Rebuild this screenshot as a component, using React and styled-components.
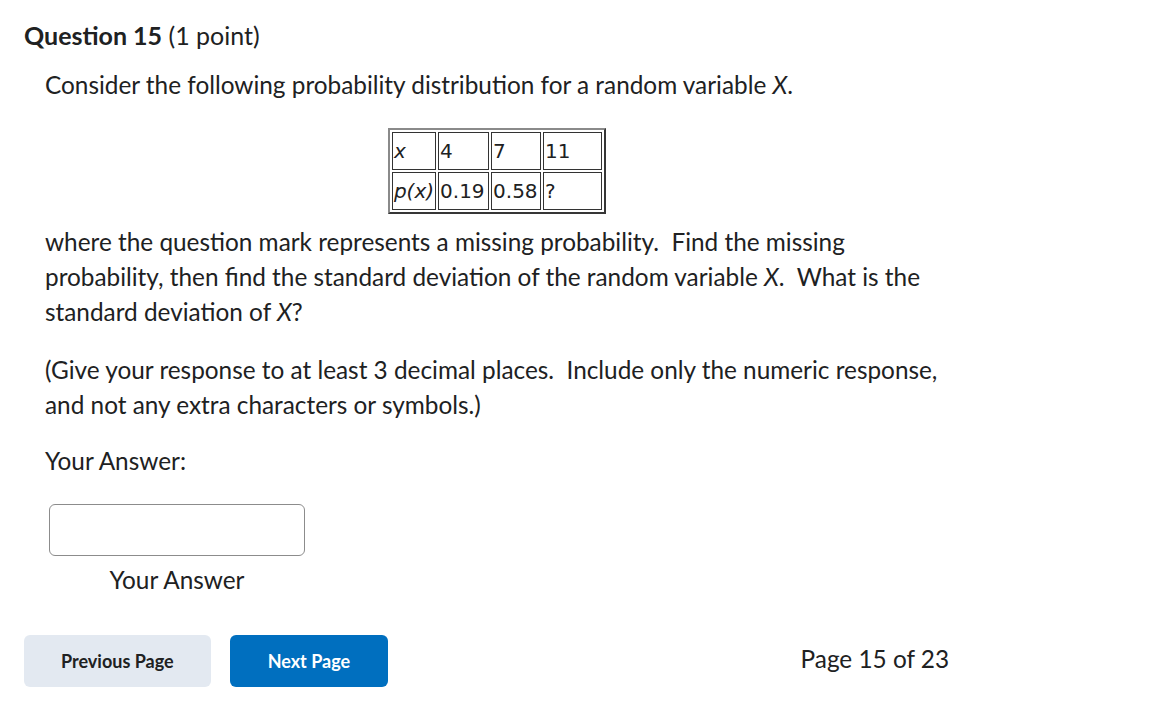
import React from 'react';
import styled, { createGlobalStyle } from 'styled-components';

const Global = createGlobalStyle`
  html, body {
    margin: 0;
    padding: 0;
    background: #ffffff;
  }
  body {
    font-family: Lato, "Noto Sans", sans-serif;
    color: #202122;
  }
`;

const Page = styled.div`
  width: 925px;
  padding: 18px 0 0 24px;
`;

const Title = styled.h2`
  margin: 0;
  font-size: 25px;
  line-height: 34px;
  font-weight: 400;
  color: #202122;
  b {
    font-weight: 700;
  }
`;

const Body = styled.div`
  padding-left: 21px;
  font-size: 24.35px;
  line-height: 35px;
`;

const Para = styled.p`
  margin: ${p => p.$top || 0}px 0 0 0;
`;

const TableWrap = styled.div`
  display: flex;
  justify-content: center;
  margin-top: 26px;
`;

const Dist = styled.table`
  border: 2px outset #8a8a8a;
  border-spacing: 2px;
  font-family: "DejaVu Sans", Verdana, sans-serif;
  font-size: 20px;
  line-height: 36px;
  color: #202122;
`;

const Cell = styled.td`
  box-sizing: content-box;
  border: 1px solid #333;
  padding: 0 1px;
  width: ${p => p.$w}px;
  height: 36px;
  vertical-align: middle;
  text-align: left;
  white-space: nowrap;
  i {
    font-style: italic;
  }
`;

const Label = styled.div`
  margin-top: 21px;
`;

const AnswerBox = styled.div`
  display: flex;
  flex-direction: column;
  align-items: center;
  width: 256px;
  margin: 26px 0 0 4px;
`;

const Input = styled.input`
  box-sizing: border-box;
  width: 256px;
  height: 52px;
  border: 1px solid #8c8c8c;
  border-radius: 6px;
  outline: none;
  font-family: inherit;
  font-size: 20px;
  padding: 0 12px;
`;

const Caption = styled.div`
  margin-top: 9px;
  line-height: 30px;
`;

const Footer = styled.div`
  display: flex;
  align-items: center;
  margin-top: 40px;
  gap: 19px;
`;

const Button = styled.button`
  height: 52px;
  padding: 0 ${p => (p.$primary ? 38 : 37)}px;
  border: none;
  border-radius: 6px;
  font-family: Lato, "Noto Sans", sans-serif;
  font-weight: 700;
  font-size: 18px;
  background: ${p => (p.$primary ? '#006fbf' : '#e3e9f1')};
  color: ${p => (p.$primary ? '#ffffff' : '#202122')};
  cursor: pointer;
`;

const PageCount = styled.div`
  margin-left: auto;
  padding-bottom: 5px;
  font-size: 24.35px;
  color: #202122;
`;

const rows = [
  [<i>x</i>, '4', '7', '11'],
  [<i>p(x)</i>, '0.19', '0.58', '?'],
];
const widths = [39, 47, 46, 55];

export default function App() {
  return (
    <>
      <Global />
      <Page>
        <Title>
          <b>Question 15</b> (1 point)
        </Title>
        <Body>
          <Para $top={15}>
            Consider the following probability distribution for a random variable <i>X</i>.
          </Para>
          <TableWrap>
            <Dist>
              <tbody>
                {rows.map((row, r) => (
                  <tr key={r}>
                    {row.map((cell, c) => (
                      <Cell key={c} $w={widths[c]}>{cell}</Cell>
                    ))}
                  </tr>
                ))}
              </tbody>
            </Dist>
          </TableWrap>
          <Para $top={10}>
            where the question mark represents a missing probability.&nbsp; Find the missing
            probability, then find the standard deviation of the random variable <i>X</i>.&nbsp; What is the
            standard deviation of <i>X</i>?
          </Para>
          <Para $top={23}>
            (Give your response to at least 3 decimal places.&nbsp; Include only the numeric response,
            and not any extra characters or symbols.)
          </Para>
          <Label>Your Answer:</Label>
          <AnswerBox>
            <Input type="text" aria-label="Your Answer" />
            <Caption>Your Answer</Caption>
          </AnswerBox>
        </Body>
        <Footer>
          <Button>Previous Page</Button>
          <Button $primary>Next Page</Button>
          <PageCount>Page 15 of 23</PageCount>
        </Footer>
      </Page>
    </>
  );
}
